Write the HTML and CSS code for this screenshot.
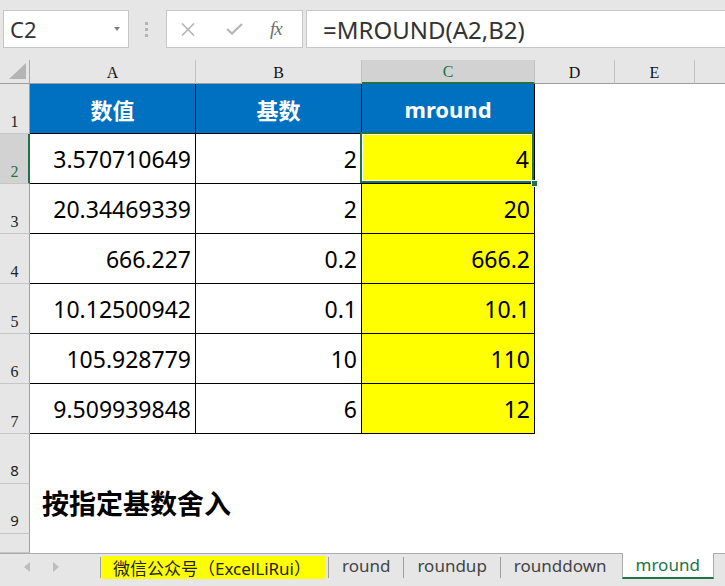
FILE: index.html
```html
<!DOCTYPE html>
<html>
<head>
<meta charset="utf-8">
<link rel="stylesheet" href="styles.css">
</head>
<body>
<div class="app">
  <div class="toolbar">
    <div class="namebox"><span class="ref">C2</span><span class="caret"></span></div>
    <div class="grip"><i></i><i></i><i></i></div>
    <div class="fxbox">
      <svg class="ico-x" width="14" height="13" viewBox="0 0 14 13"><path d="M1 0.5 L13 12.5 M13 0.5 L1 12.5" stroke="#b5b5b5" stroke-width="1.6" fill="none"/></svg>
      <svg class="ico-check" width="17" height="12" viewBox="0 0 17 12"><path d="M1 6 L6 10.5 L16 1" stroke="#b5b5b5" stroke-width="2.2" fill="none"/></svg>
      <span class="fx">fx</span>
    </div>
    <div class="formula">=MROUND(A2,B2)</div>
  </div>

  <div class="sheet">
    <div class="corner"><svg class="tri" width="17" height="16" viewBox="0 0 17 16"><polygon points="17,0 17,16 0,16" fill="#b4b4b4"/></svg></div>
    <div class="ch">A</div><div class="ch">B</div><div class="ch sel">C</div><div class="ch">D</div><div class="ch">E</div><div class="ch last"></div>

    <div class="rh">1</div>
    <div class="c hd">数值</div><div class="c hd">基数</div><div class="c hd">mround</div><div class="e"></div><div class="e"></div><div class="e"></div>

    <div class="rh sel">2</div>
    <div class="c">3.570710649</div><div class="c">2</div><div class="c y active">4<span class="selbox"></span><span class="handle"></span></div><div class="e"></div><div class="e"></div><div class="e"></div>

    <div class="rh">3</div>
    <div class="c">20.34469339</div><div class="c">2</div><div class="c y">20</div><div class="e"></div><div class="e"></div><div class="e"></div>

    <div class="rh">4</div>
    <div class="c">666.227</div><div class="c">0.2</div><div class="c y">666.2</div><div class="e"></div><div class="e"></div><div class="e"></div>

    <div class="rh">5</div>
    <div class="c">10.12500942</div><div class="c">0.1</div><div class="c y">10.1</div><div class="e"></div><div class="e"></div><div class="e"></div>

    <div class="rh">6</div>
    <div class="c">105.928779</div><div class="c">10</div><div class="c y">110</div><div class="e"></div><div class="e"></div><div class="e"></div>

    <div class="rh">7</div>
    <div class="c">9.509939848</div><div class="c">6</div><div class="c y">12</div><div class="e"></div><div class="e"></div><div class="e"></div>

    <div class="rh sans">8</div>
    <div class="e"></div><div class="e"></div><div class="e"></div><div class="e"></div><div class="e"></div><div class="e"></div>

    <div class="rh sans">9</div>
    <div class="note">按指定基数舍入</div><div class="e"></div><div class="e"></div><div class="e"></div><div class="e"></div>

    <div class="rh"></div>
    <div class="e"></div><div class="e"></div><div class="e"></div><div class="e"></div><div class="e"></div><div class="e"></div>
  </div>

  <div class="tabs">
    <div class="nav">
      <svg class="arr" width="6" height="10" viewBox="0 0 6 10"><polygon points="6,0 6,10 0,5" fill="#bdbdbd"/></svg>
      <svg class="arr" width="6" height="10" viewBox="0 0 6 10"><polygon points="0,0 0,10 6,5" fill="#bdbdbd"/></svg>
    </div>
    <span class="sep"></span>
    <div class="tab promo">微信公众号（ExcelLiRui）</div>
    <span class="sep"></span>
    <div class="tab">round</div>
    <span class="sep"></span>
    <div class="tab">roundup</div>
    <span class="sep"></span>
    <div class="tab">rounddown</div>
    <div class="tab current">mround</div>
  </div>
</div>
</body>
</html>
```

FILE: styles.css
```css
* { box-sizing: border-box; margin: 0; padding: 0; }
html, body { width: 725px; height: 586px; overflow: hidden; }
body { background: #fff; font-family: "Noto Sans", "Noto Sans CJK SC", sans-serif; color: #000; }

.app { display: flex; flex-direction: column; height: 586px; }

/* formula bar */
.toolbar { height: 60px; flex: none; background: #e6e6e6; display: flex; align-items: flex-start; padding: 10px 0 0 3px; }
.namebox { width: 126px; height: 38px; background: #fff; border: 1px solid #c6c6c6; display: flex; align-items: center; justify-content: space-between; padding: 0 8px 0 6px; }
.ref { font-size: 22px; color: #333; line-height: 1; }
.caret { width: 0; height: 0; border-left: 3.5px solid transparent; border-right: 3.5px solid transparent; border-top: 4px solid #808080; }
.grip { margin: 12px 0 0 16px; display: flex; flex-direction: column; gap: 3px; }
.grip i { display: block; width: 3px; height: 3px; background: #b4b4b4; }
.fxbox { margin-left: 18px; width: 137px; height: 38px; background: #fff; border: 1px solid #c6c6c6; display: flex; align-items: center; padding-left: 14px; }
.ico-check { margin-left: 31px; }
.fx { margin-left: 27px; font-family: "Liberation Serif", serif; font-style: italic; font-size: 19px; color: #6e6e6e; letter-spacing: -1px; }
.formula { flex: 1; margin-left: 3px; height: 38px; background: #fff; border: 1px solid #c6c6c6; border-right: none; display: flex; align-items: center; padding-left: 16px; font-size: 24px; color: #333; }

/* grid */
.sheet { flex: none; display: grid; grid-template-columns: 30px 166px 166px 173px 80px 80px 1fr; grid-template-rows: 24px repeat(9, 50px) 19px; }
.corner { background: #e6e6e6; border-right: 1px solid #ababab; border-bottom: 1px solid #9e9e9e; display: flex; align-items: flex-end; justify-content: flex-end; padding: 0 3px 4px 0; }
.ch { background: #e6e6e6; border-right: 1px solid #c2c2c2; border-bottom: 1px solid #9e9e9e; display: flex; align-items: center; justify-content: center; font-family: "Liberation Serif", serif; font-size: 16px; color: #111; padding-top: 2px; }
.ch.last { border-right: none; }
.ch.sel { background: #d2d2d2; border-bottom: 2px solid #217346; color: #217346; }
.rh { background: #e6e6e6; border-right: 1px solid #9e9e9e; border-bottom: 1px solid #c6c6c6; display: flex; align-items: flex-end; justify-content: center; font-family: "Liberation Serif", serif; font-size: 16px; color: #222; padding-bottom: 2px; }
.rh.sel { background: #d2d2d2; border-right: 2px solid #217346; color: #217346; padding-left: 1px; }
.rh.sans { font-family: "Noto Sans", sans-serif; font-size: 15px; padding-bottom: 3px; }

.c { border-right: 1px solid #000; border-bottom: 1px solid #000; display: flex; align-items: center; justify-content: flex-end; padding: 1px 4px 0 0; font-size: 23px; white-space: nowrap; }
.c.hd { background: #0070c0; color: #fff; font-weight: 700; justify-content: center; padding: 0; font-size: 22px; }
.c.y { background: #ffff00; }
.c.active { position: relative; padding-right: 5px; }
.selbox { position: absolute; top: -2px; left: -2px; right: 0; bottom: 0; border: 2px solid #217346; box-shadow: inset 0 0 0 1px #fff; z-index: 2; }
.handle { position: absolute; right: -4px; bottom: -4px; width: 7px; height: 7px; background: #217346; border: 1px solid #fff; z-index: 3; }
.note { grid-column: span 2; display: flex; align-items: center; padding: 0 0 14px 12px; font-family: "Noto Sans CJK SC", sans-serif; font-weight: 700; font-size: 27px; white-space: nowrap; }

/* sheet tabs */
.tabs { flex: 1; background: #e6e6e6; border-top: 1px solid #ababab; display: flex; align-items: flex-start; font-size: 17px; color: #444; }
.nav { width: 100px; height: 24px; display: flex; align-items: center; padding-left: 24px; gap: 23px; padding-top: 2px; }
.sep { width: 1px; height: 21px; margin-top: 3px; background: #9e9e9e; flex: none; }
.tab { height: 24px; display: flex; align-items: center; padding: 0 13px 1px 13px; white-space: nowrap; }
.tab.promo { background: #ffff00; color: #222; height: 23px; margin: 2px 3px 0 1px; width: 223px; padding: 0 0 1px 11px; font-family: "Noto Sans", "Noto Sans CJK SC", sans-serif; }
.tab.current { margin-top: -1px; height: 26px; margin-left: 2px; background: #fff; border-left: 1px solid #ababab; border-right: 1px solid #ababab; border-bottom: 2px solid #217346; color: #217346; padding: 0 13px 1px 13px; }
```
